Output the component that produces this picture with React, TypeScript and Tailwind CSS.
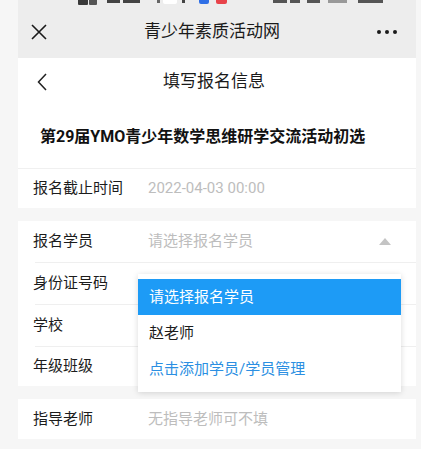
import React from 'react'

const font = { fontFamily: 'Roboto, "Noto Sans CJK SC", "Noto Sans", sans-serif' }

// clipped status bar icons peeking in at the top edge
function StatusSliver() {
  return (
    <div className="flex h-[5px] items-start overflow-hidden">
      <span className="ml-[60px] h-[5px] w-[10px] rounded-b-[1px] bg-[#3a3a3a]" />
      <span className="ml-[1px] h-[5px] w-[8px] rounded-b-[1px] bg-[#555]" />
      <span className="ml-[10px] h-[3px] w-[13px] bg-[#444]" />
      <span className="ml-[3px] h-[3px] w-[17px] bg-[#444]" />
      <span className="ml-[17px] h-[3px] w-[3px] bg-[#666]" />
      <span className="ml-[3px] h-[4px] w-[14px] rounded-b-[2px] bg-white" />
      <span className="ml-[5px] h-[3px] w-[3px] bg-[#444]" />
      <span className="ml-[14px] h-[4px] w-[10px] rounded-b-[2px] bg-[#2f6fe6]" />
      <span className="ml-[7px] h-[4px] w-[11px] rounded-b-[2px] bg-[#e8434a]" />
      <span className="ml-[46px] h-[3px] w-[14px] bg-[#555]" />
      <span className="ml-[3px] h-[3px] w-[10px] bg-[#555]" />
      <span className="ml-[7px] h-[3px] w-[13px] bg-[#555]" />
      <span className="ml-[8px] h-[3px] w-[19px] bg-[#999]" />
      <span className="ml-[11px] h-[3px] w-[25px] bg-[#555]" />
    </div>
  )
}

function Row({
  label,
  value,
  arrow,
  border
}: {
  label: string
  value?: string
  arrow?: boolean
  border?: boolean
}) {
  return (
    <div className="flex flex-col">
      <div className="flex h-[41px] items-center pl-[15px]">
        <span className="w-[115px] text-[15px] text-[#1c1c1c]">{label}</span>
        {value && <span className="text-[15px] text-[#bdbdbd]">{value}</span>}
        {arrow && (
          <svg className="ml-auto mr-[25px]" width="12" height="7" viewBox="0 0 12 7">
            <path d="M6 0 L12 7 L0 7 Z" fill="#c4c4c4" />
          </svg>
        )}
      </div>
      {border && <div className="ml-[17px] h-px bg-[#efefef]" />}
    </div>
  )
}

export default function App() {
  return (
    <div className="h-[449px] w-[421px] overflow-hidden bg-[#f6f6f6]" style={font}>
      <div className="relative ml-[18px] flex w-[398px] flex-col">
        {/* WeChat title bar */}
        <div className="flex h-[58px] flex-col bg-[#ededed]">
          <StatusSliver />
          <div className="flex h-[53px] items-center pl-[13px] pr-[19px]">
            <svg width="16" height="16" viewBox="0 0 16 16">
              <path d="M1 1 L15 15 M15 1 L1 15" stroke="#1a1a1a" strokeWidth="1.6" />
            </svg>
            <span className="flex-1 text-center text-[17px] text-[#1a1a1a]">青少年素质活动网</span>
            <div className="flex gap-[4px]">
              <span className="h-[4px] w-[4px] rounded-full bg-[#1a1a1a]" />
              <span className="h-[4px] w-[4px] rounded-full bg-[#1a1a1a]" />
              <span className="h-[4px] w-[4px] rounded-full bg-[#1a1a1a]" />
            </div>
          </div>
        </div>

        {/* page nav */}
        <div className="flex h-[48px] items-center bg-white pl-[19px] pr-[35px]">
          <svg width="10" height="18" viewBox="0 0 10 18">
            <path d="M9 1 L1.5 9 L9 17" fill="none" stroke="#222" strokeWidth="1.5" />
          </svg>
          <span className="flex-1 text-center text-[17px] text-[#1a1a1a]">填写报名信息</span>
        </div>

        {/* activity title */}
        <div className="flex h-[63px] items-center border-b border-[#f0f0f0] bg-white pl-[22px]">
          <span className="text-[16px] font-bold text-[#111]">第29届YMO青少年数学思维研学交流活动初选</span>
        </div>
        <div className="flex h-[39px] items-center bg-white pl-[15px]">
          <span className="w-[115px] text-[15px] text-[#1c1c1c]">报名截止时间</span>
          <span className="text-[15px] text-[#bdbdbd]">2022-04-03 00:00</span>
        </div>

        {/* student info */}
        <div className="mt-[13px] flex flex-col bg-white">
          <Row label="报名学员" value="请选择报名学员" arrow border />
          <Row label="身份证号码" border />
          <Row label="学校" border />
          <div className="flex h-[39px] items-center pl-[15px]">
            <span className="text-[15px] text-[#1c1c1c]">年级班级</span>
          </div>
        </div>

        <div className="mt-[13px] flex h-[40px] items-center bg-white pl-[15px]">
          <span className="w-[115px] text-[15px] text-[#1c1c1c]">指导老师</span>
          <span className="text-[15px] text-[#bdbdbd]">无指导老师可不填</span>
        </div>

        {/* select dropdown */}
        <div className="absolute left-[120px] top-[274px] flex w-[263px] flex-col bg-white py-[5px] shadow-[0_1px_6px_rgba(0,0,0,0.15)]">
          <div className="flex h-[36px] items-center bg-[#1d9bf6] pl-[11px] text-[15px] text-white">请选择报名学员</div>
          <div className="flex h-[36px] items-center pl-[11px] text-[15px] text-[#1c1c1c]">赵老师</div>
          <div className="flex h-[36px] items-center pl-[11px] text-[15px] text-[#2b8fe2]">点击添加学员/学员管理</div>
        </div>
      </div>
    </div>
  )
}
